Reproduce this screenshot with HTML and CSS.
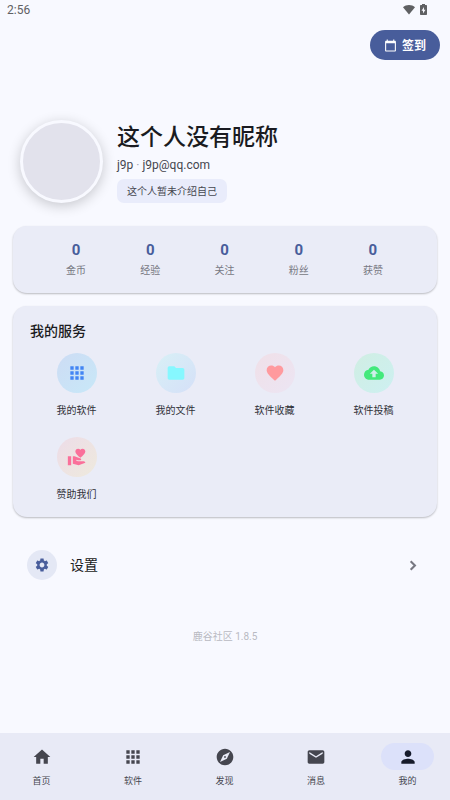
FILE: index.html
```
<!DOCTYPE html>
<html lang="zh-CN">
<head>
<meta charset="utf-8">
<meta name="viewport" content="width=device-width, initial-scale=1">
<title>我的</title>
<link rel="stylesheet" href="styles.css">
</head>
<body>
<div class="status">
  <span>2:56</span>
  <span class="status-icons">
    <svg class="wifi" viewBox="0 0 24 20"><path d="M0 5.500C3.200 2.700 7.400 1 12 1s8.800 1.700 12 4.500L12 20z"/></svg>
    <svg class="battery" viewBox="0 0 14 22"><path fill-rule="evenodd" d="M4 2V0h6v2h2.500C13.400 2 14 2.600 14 3.500v17c0 .9-.6 1.500-1.500 1.500h-11C.6 22 0 21.400 0 20.500v-17C0 2.600.6 2 1.500 2zM8 6l-5 7.500h3V19l5-7.500H8z"/></svg>
  </span>
</div>
<main>
  <div class="actions">
    <button class="checkin" type="button">
      <svg viewBox="0 0 24 24"><path fill-rule="evenodd" d="M20 3h-1V1h-2v2H7V1H5v2H4c-1.100 0-2 .9-2 2v16c0 1.100.9 2 2 2h16c1.100 0 2-.9 2-2V5c0-1.100-.9-2-2-2zm0 18H4V8h16z"/></svg>
      <span>签到</span>
    </button>
  </div>

  <section class="profile">
    <div class="avatar"></div>
    <div class="identity">
      <h1>这个人没有昵称</h1>
      <p class="account">j9p <span class="dot">·</span> j9p@qq.com</p>
      <p class="bio">这个人暂未介绍自己</p>
    </div>
  </section>

  <section class="card stats">
    <a href="#"><b>0</b><span>金币</span></a>
    <a href="#"><b>0</b><span>经验</span></a>
    <a href="#"><b>0</b><span>关注</span></a>
    <a href="#"><b>0</b><span>粉丝</span></a>
    <a href="#"><b>0</b><span>获赞</span></a>
  </section>

  <section class="card services">
    <h2>我的服务</h2>
    <div class="service-grid">
      <a href="#"><span class="bubble apps"><svg viewBox="0 0 24 24"><path d="M4 8h4V4H4zm6 12h4v-4h-4zm-6 0h4v-4H4zm0-6h4v-4H4zm6 0h4v-4h-4zm6-10v4h4V4zm-6 4h4V4h-4zm6 6h4v-4h-4zm0 6h4v-4h-4z"/></svg></span>我的软件</a>
      <a href="#"><span class="bubble files"><svg viewBox="0 0 24 24"><path d="M10 4H4c-1.100 0-2 .9-2 2v12c0 1.100.9 2 2 2h16c1.100 0 2-.9 2-2V8c0-1.100-.9-2-2-2h-8z"/></svg></span>我的文件</a>
      <a href="#"><span class="bubble likes"><svg viewBox="0 0 24 24"><path d="m12 21.350-1.450-1.320C5.400 15.360 2 12.280 2 8.500 2 5.420 4.420 3 7.500 3c1.740 0 3.410.81 4.500 2.090C13.090 3.810 14.760 3 16.500 3 19.580 3 22 5.420 22 8.500c0 3.780-3.400 6.860-8.550 11.540z"/></svg></span>软件收藏</a>
      <a href="#"><span class="bubble upload"><svg viewBox="0 0 24 24"><path fill-rule="evenodd" d="M19.350 10.040C18.670 6.590 15.640 4 12 4 9.110 4 6.600 5.640 5.350 8.040 2.340 8.360 0 10.910 0 14c0 3.310 2.690 6 6 6h13c2.760 0 5-2.240 5-5 0-2.640-2.050-4.780-4.650-4.960zM14 13v4h-4v-4H7l5-5 5 5z"/></svg></span>软件投稿</a>
      <a href="#"><span class="bubble donate"><svg viewBox="0 0 24 24"><path d="M1 11h4v11H1zM16 3.250C16.650 2.490 17.660 2 18.700 2 20.550 2 22 3.450 22 5.300c0 2.270-2.910 4.900-6 7.700-3.090-2.810-6-5.440-6-7.700C10 3.450 11.450 2 13.300 2c1.040 0 2.050.49 2.700 1.250zM20 17h-7l-2.090-.73.330-.94L13 16h2.820c.65 0 1.180-.53 1.180-1.180 0-.49-.31-.93-.77-1.110L8.970 11H7v9.020L14 22l8.010-3c-.01-1.100-.9-2-2.010-2z"/></svg></span>赞助我们</a>
    </div>
  </section>

  <a class="settings" href="#">
    <span class="gear"><svg viewBox="0 0 24 24"><path d="M19.140 12.940c.04-.3.060-.61.060-.94s-.02-.64-.07-.94l2.030-1.580c.18-.14.230-.41.120-.61l-1.920-3.320c-.12-.22-.37-.29-.59-.22l-2.390.96c-.5-.38-1.030-.7-1.620-.94l-.36-2.540c-.04-.24-.24-.41-.48-.41h-3.840c-.24 0-.43.170-.47.410l-.36 2.540c-.59.240-1.130.570-1.620.940l-2.390-.96c-.22-.08-.47 0-.59.220L2.740 8.870c-.12.210-.08.470.120.610l2.030 1.580c-.05.300-.09.630-.09.940s.02.640.070.940l-2.030 1.580c-.18.140-.23.410-.12.610l1.920 3.320c.12.220.370.290.590.220l2.390-.96c.5.380 1.030.700 1.620.940l.36 2.540c.05.240.240.410.480.410h3.840c.24 0 .44-.17.470-.41l.36-2.540c.59-.24 1.130-.56 1.620-.94l2.390.96c.22.080.470 0 .59-.22l1.920-3.320c.12-.22.070-.47-.12-.61zM12 15.600c-1.980 0-3.600-1.620-3.600-3.600s1.620-3.600 3.600-3.600 3.600 1.620 3.600 3.600-1.620 3.600-3.600 3.600z"/></svg></span>
    <span class="settings-label">设置</span>
    <svg class="chevron" viewBox="0 0 24 24"><path d="m8 6 6 6-6 6"/></svg>
  </a>

  <p class="version">鹿谷社区 1.8.5</p>
</main>

<nav class="tabs">
  <a href="#"><span class="pill"><svg viewBox="0 0 24 24"><path d="M10 20v-6h4v6h5v-8h3L12 3 2 12h3v8z"/></svg></span>首页</a>
  <a href="#"><span class="pill"><svg viewBox="0 0 24 24"><path d="M4 8h4V4H4zm6 12h4v-4h-4zm-6 0h4v-4H4zm0-6h4v-4H4zm6 0h4v-4h-4zm6-10v4h4V4zm-6 4h4V4h-4zm6 6h4v-4h-4zm0 6h4v-4h-4z"/></svg></span>软件</a>
  <a href="#"><span class="pill"><svg viewBox="0 0 24 24"><path fill-rule="evenodd" d="M12 10.900c-.61 0-1.100.49-1.100 1.100s.49 1.100 1.100 1.100 1.100-.49 1.100-1.100-.49-1.100-1.100-1.100zM12 2C6.480 2 2 6.480 2 12s4.480 10 10 10 10-4.480 10-10S17.520 2 12 2zm2.190 12.190L6 18l3.810-8.190L18 6z"/></svg></span>发现</a>
  <a href="#"><span class="pill"><svg viewBox="0 0 24 24"><path d="M20 4H4c-1.100 0-1.990.9-1.990 2L2 18c0 1.100.9 2 2 2h16c1.100 0 2-.9 2-2V6c0-1.100-.9-2-2-2zm0 4-8 5-8-5V6l8 5 8-5z"/></svg></span>消息</a>
  <a class="active" href="#" aria-current="page"><span class="pill"><svg viewBox="0 0 24 24"><path d="M12 12c2.210 0 4-1.790 4-4s-1.790-4-4-4-4 1.790-4 4 1.790 4 4 4zm0 2c-2.670 0-8 1.340-8 4v2h16v-2c0-2.660-5.330-4-8-4z"/></svg></span>我的</a>
</nav>
</body>
</html>
```
FILE: styles.css
```
* {
  box-sizing: border-box;
}

body {
  margin: 0;
  min-height: 100vh;
  display: flex;
  flex-direction: column;
  background: #f8f9ff;
  color: #1a1b21;
  font: 10px/16px Roboto, "Noto Sans CJK SC", sans-serif;
}

a {
  color: inherit;
  text-decoration: none;
}

h1, h2, p {
  margin: 0;
}

svg {
  display: block;
  fill: currentColor;
}

.status {
  display: flex;
  justify-content: space-between;
  align-items: center;
  height: 20px;
  padding: 0 23px 0 7px;
  color: #5f6063;
  font-size: 12px;
}

.status-icons {
  display: flex;
  align-items: center;
  gap: 5px;
  padding-bottom: 2px;
}

.wifi {
  width: 12px;
  height: 11px;
}

.battery {
  width: 7px;
  height: 11px;
}

main {
  flex: 1;
  padding: 10px 13px 0;
}

.actions {
  display: flex;
  justify-content: flex-end;
  margin-right: -3px;
}

.checkin {
  display: flex;
  align-items: center;
  gap: 5px;
  height: 30px;
  padding: 1px 14px 0;
  border: 0;
  border-radius: 15px;
  background: #485d9b;
  color: #fff;
  font: 700 12px/16px Roboto, "Noto Sans CJK SC", sans-serif;
}

.checkin svg {
  width: 13px;
  height: 13px;
}

.profile {
  display: flex;
  align-items: flex-start;
  gap: 14px;
  margin-top: 60px;
  padding-left: 7px;
}

.avatar {
  width: 83px;
  height: 83px;
  border: 3px solid #f8f9ff;
  border-radius: 50%;
  background: #e2e2ec;
  box-shadow: 0 3px 13px rgba(0, 0, 0, 0.2);
}

.identity {
  display: flex;
  flex-direction: column;
  align-items: flex-start;
}

h1 {
  font-size: 23px;
  line-height: 36px;
  font-weight: 500;
}

.account {
  margin-top: 1px;
  color: #45464f;
  font-size: 12px;
}

.dot {
  color: #a0a1ab;
}

.bio {
  margin-top: 6px;
  padding: 5px 10px 3px;
  border-radius: 7px;
  background: #e9ecfb;
  color: #45464f;
}

.card {
  border-radius: 14px;
  background: #eaecf7;
  box-shadow: 0 1px 2px rgba(0, 0, 0, 0.25);
}

.stats {
  display: flex;
  margin-top: 23px;
  padding: 14px 27px 14px 26px;
}

.stats a {
  flex: 1;
  display: flex;
  flex-direction: column;
  align-items: center;
  gap: 3px;
  color: #777882;
}

.stats b {
  color: #485d9b;
  font-size: 15px;
  line-height: 20px;
  font-weight: 700;
}

.services {
  margin-top: 13px;
  padding: 15px 14px 14px;
}

h2 {
  padding-left: 3px;
  font-size: 14px;
  line-height: 20px;
  font-weight: 500;
}

.service-grid {
  display: grid;
  grid-template-columns: repeat(4, 1fr);
  row-gap: 18px;
  margin-top: 12px;
  color: #303138;
}

.service-grid a {
  display: flex;
  flex-direction: column;
  align-items: center;
  gap: 10px;
}

.bubble {
  display: grid;
  place-items: center;
  width: 40px;
  height: 40px;
  border-radius: 50%;
}

.bubble svg {
  width: 20px;
  height: 20px;
}

.apps {
  background: linear-gradient(135deg, #cddcf4, #c8e8f8);
  color: #4285f4;
}

.files {
  background: linear-gradient(135deg, #d8f0f6, #d5e0f8);
  color: #86f8ff;
}

.likes {
  background: linear-gradient(135deg, #f0e0e8, #ece5f3);
  color: #ff9a9e;
}

.upload {
  background: linear-gradient(135deg, #d0eee3, #cdf0f1);
  color: #43e97b;
}

.donate {
  background: linear-gradient(135deg, #eddce8, #eeeadd);
  color: #fa709a;
}

.settings {
  display: flex;
  align-items: center;
  gap: 13px;
  margin-top: 20px;
  padding: 13px 15px 13px 14px;
}

.gear {
  display: grid;
  place-items: center;
  width: 30px;
  height: 30px;
  border-radius: 50%;
  background: #e4e8f5;
  color: #485d9b;
}

.gear svg {
  width: 16px;
  height: 16px;
}

.settings-label {
  flex: 1;
  font-size: 14px;
  line-height: 20px;
}

.chevron {
  width: 17px;
  height: 17px;
  fill: none;
  stroke: #777882;
  stroke-width: 3;
}

.version {
  margin: 36px 0 20px;
  color: #b9bac2;
  text-align: center;
}

.tabs {
  position: sticky;
  bottom: 0;
  display: flex;
  justify-content: space-between;
  padding: 10px 16px 11px 15px;
  background: #e8eaf6;
  color: #45464f;
}

.tabs a {
  display: flex;
  flex-direction: column;
  align-items: center;
  gap: 3px;
  font-size: 9px;
}

.pill {
  display: grid;
  place-items: center;
  width: 53px;
  height: 27px;
  border-radius: 14px;
}

.pill svg {
  width: 20px;
  height: 20px;
}

.active .pill {
  background: #dce1fa;
  color: #161b2c;
}
```
